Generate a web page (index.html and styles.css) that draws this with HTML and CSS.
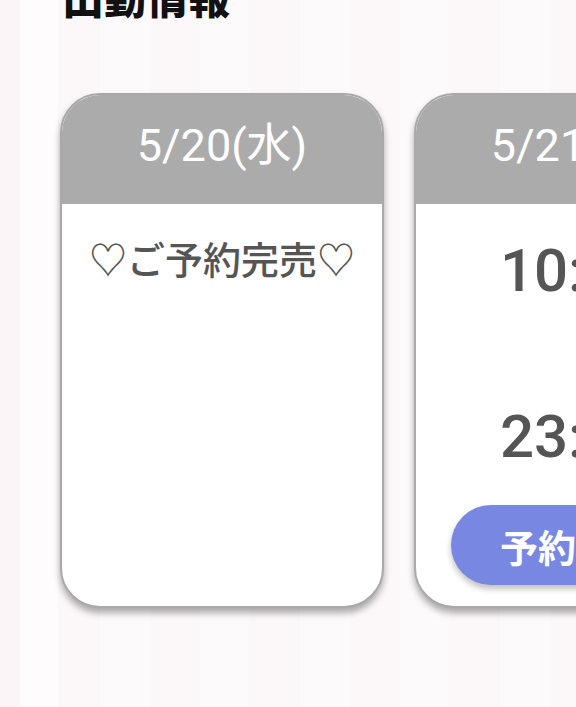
FILE: index.html
```html
<!DOCTYPE html>
<html lang="ja">
<head>
<meta charset="utf-8">
<link rel="stylesheet" href="styles.css">
</head>
<body>
<div class="page">
  <h2 class="title">出勤情報</h2>
  <div class="cards">
    <div class="card">
      <div class="card-head">5/20(水)</div>
      <div class="card-body">
        <p class="soldout">♡ご予約完売♡</p>
      </div>
    </div>
    <div class="card">
      <div class="card-head">5/21(木)</div>
      <div class="card-body">
        <p class="time">10:00</p>
        <p class="time time-end">23:00</p>
        <a class="reserve" href="#">予約する</a>
      </div>
    </div>
  </div>
</div>
</body>
</html>
```
FILE: styles.css
```css
html, body {
  margin: 0;
  padding: 0;
  width: 576px;
  height: 707px;
  overflow: hidden;
}
body {
  font-family: Roboto, "Noto Sans CJK JP", sans-serif;
  background-color: #fdf9fb;
  background-image: linear-gradient(90deg, #fcf5f8 0, #fcf5f8 20px, #fefcfd 20px, #fefcfd 58px, transparent 58px),
    repeating-linear-gradient(90deg, #fdfafb 0, #fdfafb 50px, #fcf7f9 50px, #fcf7f9 100px);
}
.page {
  padding-left: 60px;
}
.title {
  margin: -25px 0 0 2px;
  font-family: "Noto Sans CJK JP", sans-serif;
  font-size: 42px;
  line-height: 42px;
  font-weight: 900;
  color: #111;
}
.cards {
  display: flex;
  gap: 30px;
  margin-top: 76px;
}
.card {
  flex: 0 0 324px;
  height: 515px;
  box-sizing: border-box;
  border: 2px solid #a9a9a9;
  border-radius: 40px;
  overflow: hidden;
  background: #fff;
  box-shadow: 0 5px 7px rgba(0, 0, 0, 0.33);
  display: flex;
  flex-direction: column;
}
.card-head {
  box-sizing: border-box;
  height: 109px;
  padding-bottom: 16px;
  background: #ababab;
  color: #fff;
  font-size: 45px;
  display: flex;
  align-items: center;
  justify-content: center;
  flex-shrink: 0;
}
.card-body {
  display: flex;
  flex-direction: column;
  align-items: center;
}
.soldout {
  margin: 32px 0 0;
  font-family: "Noto Sans CJK JP", sans-serif;
  font-size: 38px;
  line-height: 44px;
  font-weight: 500;
  color: #555;
  white-space: nowrap;
}
.time {
  margin: 35px 0 0;
  font-size: 60px;
  line-height: 64px;
  font-weight: 500;
  color: #555;
}
.time-end {
  margin-top: 102px;
}
.reserve {
  margin-top: 36px;
  width: 250px;
  height: 80px;
  border-radius: 40px;
  background: #7888e2;
  color: #fff;
  font-family: "Noto Sans CJK JP", sans-serif;
  font-size: 38px;
  font-weight: 700;
  text-decoration: none;
  display: flex;
  align-items: center;
  justify-content: center;
  box-shadow: 0 4px 6px rgba(0, 0, 0, 0.25);
}
```
